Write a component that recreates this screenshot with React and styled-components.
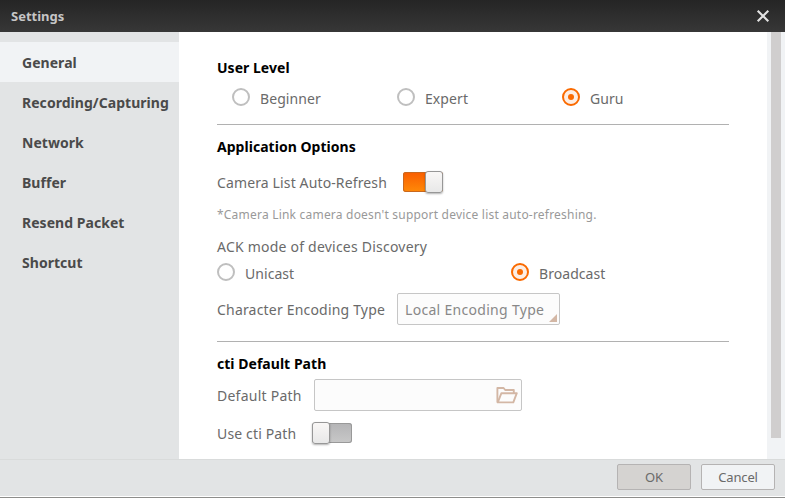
import React, { useState } from "react";
import styled, { createGlobalStyle, css } from "styled-components";

const GlobalStyle = createGlobalStyle`
  *, *::before, *::after { box-sizing: border-box; }
  body { margin: 0; overflow: hidden; }
`;

const Window = styled.div`
  display: flex;
  flex-direction: column;
  width: 785px;
  height: 498px;
  background: #ffffff;
  border-bottom: 1px solid #8d8d8b;
  font: 400 14px/20px "Noto Sans", "Open Sans", sans-serif;
  color: #6a6a6a;
`;

const TitleBar = styled.header`
  display: flex;
  flex: none;
  align-items: center;
  justify-content: space-between;
  height: 32px;
  padding: 0 15px 0 11px;
  background: linear-gradient(#252525, #373737);
`;

const Title = styled.h1`
  margin: 0;
  font-size: 13px;
  font-weight: 700;
  line-height: 20px;
  color: #c6c6c6;
`;

const CloseButton = styled.button`
  display: flex;
  padding: 0;
  border: 0;
  background: none;
`;

const Body = styled.div`
  display: flex;
  flex: none;
  height: 427px;
`;

const Sidebar = styled.nav`
  flex: none;
  width: 179px;
  padding-top: 10px;
  background: #e2e4e5;
`;

const NavItem = styled.div`
  display: flex;
  align-items: center;
  height: 40px;
  padding: 2px 0 0 22px;
  font-weight: 700;
  letter-spacing: 0.04px;
  color: #4a4a4a;
  background: ${(p) => (p.$active ? "#f1f3f5" : "transparent")};
`;

const Content = styled.main`
  flex: 1;
  padding: 0 38px;
  background: #ffffff;
`;

const ScrollTrack = styled.div`
  flex: none;
  width: 18px;
  padding-left: 4px;
  background: #f1f3f5;
`;

const ScrollThumb = styled.div`
  width: 10px;
  height: 406px;
  background: #d0cece;
`;

const Section = styled.section`
  height: ${(p) => p.$height}px;
  padding-top: ${(p) => p.$top}px;
  border-bottom: ${(p) => (p.$last ? "0" : "1px solid #b1b1b1")};
`;

const Heading = styled.h2`
  margin: 0;
  font-size: 14px;
  font-weight: 700;
  line-height: 20px;
  letter-spacing: 0.03px;
  color: #000000;
`;

const Text = styled.span`
  white-space: nowrap;
  letter-spacing: ${(p) => p.$spacing ?? 0.15}px;
  color: ${(p) => p.$color ?? "inherit"};
`;

const Note = styled.p`
  margin: 13px 0 0;
  font-size: 12px;
  line-height: 17px;
  letter-spacing: 0.21px;
  white-space: nowrap;
  color: #999999;
`;

const Field = styled.div`
  display: flex;
  align-items: center;
  height: ${(p) => p.$height}px;
  margin-top: ${(p) => p.$top}px;
`;

const RadioGroup = styled.div`
  display: grid;
  grid-template-columns: ${(p) => p.$columns};
  margin-top: ${(p) => p.$top}px;
  padding-left: ${(p) => p.$indent ?? 0}px;
`;

const RadioLabel = styled.label`
  display: flex;
  align-items: flex-start;
  gap: 10px;
  height: 21px;

  ${Text} { margin-top: 1px; }
`;

const RadioDot = styled.span`
  display: flex;
  align-items: center;
  justify-content: center;
  width: 18px;
  height: 18px;
  border: 2px solid ${(p) => (p.$on ? "#fa6a00" : "#bfbfbf")};
  border-radius: 50%;
  background: ${(p) => (p.$on ? "#fdeee4" : "#ffffff")};

  ${(p) =>
    p.$on &&
    css`
      &::after {
        content: "";
        width: 6px;
        height: 6px;
        border-radius: 50%;
        background: #fa6a00;
      }
    `}
`;

const Toggle = styled.button`
  display: flex;
  align-items: center;
  justify-content: ${(p) => (p.$on ? "flex-end" : "flex-start")};
  width: 40px;
  height: 20px;
  padding: 0;
  margin-left: ${(p) => p.$gap}px;
  border: 0;
  border-radius: 3px;
  background: ${(p) =>
    p.$on ? "linear-gradient(#f95d00, #ff8a08)" : "linear-gradient(#b4b4b6, #c8c8c8)"};
  box-shadow: inset 0 0 0 1px ${(p) => (p.$on ? "#c9681e" : "#999999")};
`;

const ToggleThumb = styled.span`
  flex: none;
  width: 18px;
  height: 22px;
  border: 1px solid #979797;
  border-radius: 3px;
  background: linear-gradient(#f9f7f6, #e8e8e8);
  box-shadow: 0 1px 2px rgba(0, 0, 0, 0.3);
`;

const Box = styled.div`
  display: flex;
  align-items: center;
  justify-content: space-between;
  width: ${(p) => p.$width}px;
  height: 32px;
  border: 1px solid #c6c6c6;
  border-radius: 2px;
  background: #fcfcfc;
`;

const Select = styled(Box)`
  margin-left: 12px;
  padding: 0 2px 0 7px;

  ${Text} { padding-top: 2px; }
`;

const Corner = styled.span`
  align-self: flex-end;
  width: 8px;
  height: 8px;
  margin-bottom: 2px;
  background: #d3b7a5;
  clip-path: polygon(100% 0, 100% 100%, 0 100%);
`;

const PathInput = styled(Box)`
  justify-content: flex-end;
  padding-right: 3px;
`;

const FieldLabel = styled(Text)`
  flex: none;
  width: ${(p) => p.$width}px;
  padding-top: 2px;
`;

const Footer = styled.footer`
  display: flex;
  flex: none;
  gap: 10px;
  justify-content: flex-end;
  height: 37px;
  padding: 4px 10px 0 0;
  border-top: 1px solid #d9dbdb;
  background: #e2e4e5;
`;

const Button = styled.button`
  display: flex;
  align-items: center;
  justify-content: center;
  width: 74px;
  height: 26px;
  padding: 0 0 1px;
  border: 1px solid #b5b3b3;
  border-radius: 2px;
  background: ${(p) => (p.$muted ? "#d5d3d1" : "#f1f3f5")};
  font: inherit;
  font-size: 13px;
  letter-spacing: -0.15px;
  color: #6a6a6a;
`;

const NAV = ["General", "Recording/Capturing", "Network", "Buffer", "Resend Packet", "Shortcut"];

function Radio({ label, on, spacing, onSelect }) {
  return (
    <RadioLabel onClick={onSelect}>
      <RadioDot $on={on} />
      <Text $spacing={spacing}>{label}</Text>
    </RadioLabel>
  );
}

function Switch({ on, gap, onToggle }) {
  return (
    <Toggle $on={on} $gap={gap} onClick={onToggle}>
      <ToggleThumb />
    </Toggle>
  );
}

function CloseIcon() {
  return (
    <svg width="14" height="14" viewBox="0 0 14 14" fill="none" stroke="#e2e2e2" strokeWidth="2.1">
      <path d="M1.7 1.7 12.3 12.3M12.3 1.7 1.7 12.3" />
    </svg>
  );
}

function FolderIcon() {
  return (
    <svg width="22" height="18" viewBox="0 0 22 18" fill="none" stroke="#d3b7a5" strokeWidth="1.9" strokeLinejoin="round">
      <path d="M1.4 16.4V2H7.6L9.2 4H17.8V7" />
      <path d="M1.8 16.4 5.4 7.2H20.8L17.3 16.4Z" />
    </svg>
  );
}

export default function App() {
  const [page, setPage] = useState("General");
  const [level, setLevel] = useState("Guru");
  const [ack, setAck] = useState("Broadcast");
  const [refresh, setRefresh] = useState(true);
  const [useCti, setUseCti] = useState(false);

  return (
    <>
      <GlobalStyle />
      <Window>
        <TitleBar>
          <Title>Settings</Title>
          <CloseButton aria-label="Close"><CloseIcon /></CloseButton>
        </TitleBar>
        <Body>
          <Sidebar>
            {NAV.map((name) => (
              <NavItem key={name} $active={name === page} onClick={() => setPage(name)}>
                {name}
              </NavItem>
            ))}
          </Sidebar>
          <Content>
            <Section $height={93} $top={26}>
              <Heading>User Level</Heading>
              <RadioGroup $columns="165px 165px 1fr" $top={10} $indent={15}>
                {["Beginner", "Expert", "Guru"].map((name) => (
                  <Radio key={name} label={name} spacing={0.08} on={level === name} onSelect={() => setLevel(name)} />
                ))}
              </RadioGroup>
            </Section>
            <Section $height={217} $top={12}>
              <Heading>Application Options</Heading>
              <Field $height={22} $top={14}>
                <FieldLabel $width={170} $spacing={0.13}>Camera List Auto-Refresh</FieldLabel>
                <Switch on={refresh} gap={16} onToggle={() => setRefresh(!refresh)} />
              </Field>
              <Note>*Camera Link camera doesn't support device list auto-refreshing.</Note>
              <Field $height={20} $top={14}>
                <Text $spacing={0.22}>ACK mode of devices Discovery</Text>
              </Field>
              <RadioGroup $columns="294px 1fr" $top={6}>
                {["Unicast", "Broadcast"].map((name) => (
                  <Radio key={name} label={name} spacing={0.05} on={ack === name} onSelect={() => setAck(name)} />
                ))}
              </RadioGroup>
              <Field $height={32} $top={9}>
                <FieldLabel $width={168} $spacing={0.19}>Character Encoding Type</FieldLabel>
                <Select $width={163}>
                  <Text $spacing={0.3} $color="#888888">Local Encoding Type</Text>
                  <Corner />
                </Select>
              </Field>
            </Section>
            <Section $height={117} $top={12} $last>
              <Heading>cti Default Path</Heading>
              <Field $height={32} $top={5}>
                <FieldLabel $width={97} $spacing={0.25}>Default Path</FieldLabel>
                <PathInput $width={208}><FolderIcon /></PathInput>
              </Field>
              <Field $height={22} $top={11}>
                <FieldLabel $width={95}>Use cti Path</FieldLabel>
                <Switch on={useCti} gap={0} onToggle={() => setUseCti(!useCti)} />
              </Field>
            </Section>
          </Content>
          <ScrollTrack><ScrollThumb /></ScrollTrack>
        </Body>
        <Footer>
          <Button $muted>OK</Button>
          <Button>Cancel</Button>
        </Footer>
      </Window>
    </>
  );
}
